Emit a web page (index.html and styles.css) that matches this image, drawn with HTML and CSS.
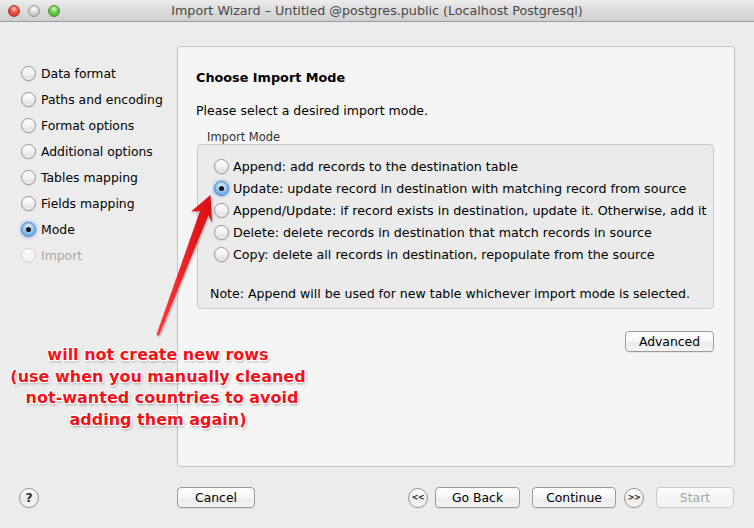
FILE: index.html
```html
<!DOCTYPE html>
<html lang="en">
<head>
<meta charset="utf-8">
<title>Import Wizard</title>
<link rel="stylesheet" href="styles.css">
</head>
<body>
<div class="window">
  <header class="titlebar">
    <div class="lights">
      <span class="light red"></span>
      <span class="light gray"></span>
      <span class="light green"></span>
    </div>
    <div class="title">Import Wizard – Untitled @postgres.public (Localhost Postgresql)</div>
    <div></div>
  </header>

  <div class="main">
    <ul class="steps">
      <li><span class="radio"></span>Data format</li>
      <li><span class="radio"></span>Paths and encoding</li>
      <li><span class="radio"></span>Format options</li>
      <li><span class="radio"></span>Additional options</li>
      <li><span class="radio"></span>Tables mapping</li>
      <li><span class="radio"></span>Fields mapping</li>
      <li><span class="radio on"></span>Mode</li>
      <li class="disabled"><span class="radio dis"></span>Import</li>
    </ul>

    <section class="panel">
      <h1 class="heading">Choose Import Mode</h1>
      <p class="intro">Please select a desired import mode.</p>
      <div class="group-label">Import Mode</div>
      <div class="group">
        <div class="opt"><span class="radio"></span>Append: add records to the destination table</div>
        <div class="opt"><span class="radio on"></span>Update: update record in destination with matching record from source</div>
        <div class="opt"><span class="radio"></span>Append/Update: if record exists in destination, update it. Otherwise, add it</div>
        <div class="opt"><span class="radio"></span>Delete: delete records in destination that match records in source</div>
        <div class="opt"><span class="radio"></span>Copy: delete all records in destination, repopulate from the source</div>
        <p class="note">Note: Append will be used for new table whichever import mode is selected.</p>
      </div>
      <div class="adv-row"><button class="btn adv">Advanced</button></div>
    </section>
  </div>

  <footer class="footer">
    <button class="circle help">?</button>
    <button class="btn cancel">Cancel</button>
    <div class="nav">
      <button class="circle small">&lt;&lt;</button>
      <button class="btn back">Go Back</button>
      <button class="btn cont">Continue</button>
      <button class="circle small fwd">&gt;&gt;</button>
      <button class="btn start" disabled>Start</button>
    </div>
  </footer>

  <svg class="arrow" width="754" height="528" viewBox="0 0 754 528">
    <defs>
      <linearGradient id="ag" x1="0" y1="0" x2="1" y2="0">
        <stop offset="0" stop-color="#ff3b3b"/>
        <stop offset="1" stop-color="#d80c12"/>
      </linearGradient>
      <filter id="sh" x="-20%" y="-20%" width="140%" height="140%">
        <feDropShadow dx="1" dy="1" stdDeviation="1" flood-color="#000" flood-opacity="0.3"/>
      </filter>
    </defs>
    <polygon filter="url(#sh)" fill="url(#ag)" points="210.5,195 191,211.5 200,211 156.5,334.5 158,336 159.5,334.5 208.5,215 212,223"/>
  </svg>

  <div class="annotation">will not create new rows<br>(use when you manually cleaned<br><span class="shift">not-wanted countries to avoid</span><br>adding them again)</div>
</div>
</body>
</html>
```

FILE: styles.css
```css
* { box-sizing: border-box; }

html, body {
  margin: 0;
  padding: 0;
}

body {
  width: 754px;
  height: 528px;
  overflow: hidden;
  background: #ececec;
  font-family: "DejaVu Sans", "Liberation Sans", sans-serif;
  font-size: 12.4px;
  color: #000;
}

.window {
  position: relative;
  width: 754px;
  height: 528px;
  display: flex;
  flex-direction: column;
}

/* title bar */
.titlebar {
  height: 22px;
  flex: none;
  border-bottom: 1px solid #9c9c9c;
  background: linear-gradient(#ececec, #dcdcdc 50%, #cfcfcf);
  display: grid;
  grid-template-columns: 1fr auto 1fr;
  align-items: center;
}

.lights {
  display: flex;
  gap: 8px;
  padding-left: 8px;
}

.light {
  width: 12px;
  height: 12px;
  border-radius: 50%;
}

.light.red {
  border: 1px solid #a63a32;
  background: radial-gradient(circle at 50% 30%, #ffc9c2 0, #f0574b 40%, #c52a20 100%);
}

.light.gray {
  border: 1px solid #9a9a9a;
  background: radial-gradient(circle at 50% 30%, #ffffff 0, #d8d8d8 45%, #a9a9a9 100%);
}

.light.green {
  border: 1px solid #4c8f35;
  background: radial-gradient(circle at 50% 30%, #d8f7c6 0, #79cf55 40%, #3f9a25 100%);
}

.title {
  color: #474747;
  font-size: 12.7px;
  line-height: 21px;
  white-space: nowrap;
}

/* main area */
.main {
  display: flex;
  padding-top: 24px;
  flex: none;
}

.steps {
  width: 177px;
  margin: 0;
  padding: 14px 0 0 21px;
  list-style: none;
  flex: none;
}

.steps li {
  height: 26px;
  display: flex;
  align-items: center;
  gap: 5px;
  white-space: nowrap;
}

.steps li.disabled {
  color: #a9a9a9;
}

.radio {
  position: relative;
  flex: none;
  width: 15px;
  height: 15px;
  border-radius: 50%;
  border: 1px solid #939393;
  background: linear-gradient(#ffffff, #f2f2f2 50%, #e3e3e3 80%, #f8f8f8);
  box-shadow: 0 1px 1px rgba(0, 0, 0, 0.08);
}

.radio.on {
  border-color: #4a7cb6;
  background: radial-gradient(circle at 50% 30%, #e3f1ff 0, #9ccaf5 40%, #5597e2 100%);
  box-shadow: 0 0 3px 1px rgba(85, 145, 225, 0.55);
}

.radio.on::after {
  content: "";
  position: absolute;
  left: 50%;
  top: 50%;
  width: 5px;
  height: 5px;
  margin: -2.5px 0 0 -2.5px;
  border-radius: 50%;
  background: #111;
}

.radio.dis {
  border-color: #cdcdcd;
  background: linear-gradient(#fbfbfb, #efefef);
  box-shadow: none;
}

/* right panel */
.panel {
  width: 558px;
  height: 421px;
  flex: none;
  border: 1px solid #c2c2c2;
  border-radius: 4px;
  background: #f5f5f5;
  padding: 23px 20px 0 18px;
}

.heading {
  margin: 0;
  font-size: 12.8px;
  font-weight: bold;
  line-height: 16px;
}

.intro {
  margin: 17px 0 0;
  line-height: 16px;
  font-size: 12.5px;
}

.group-label {
  margin: 11px 0 0 11px;
  font-size: 11.5px;
  line-height: 14px;
  color: #333;
}

.group {
  margin-left: 1px;
  width: 517px;
  border: 1px solid #c9c9c9;
  border-radius: 4px;
  background: #ebebeb;
  padding: 10px 0 6px 16px;
  font-size: 12.7px;
}

.opt {
  height: 22px;
  display: flex;
  align-items: center;
  gap: 4px;
  white-space: nowrap;
}

.note {
  margin: 21px 0 0 -4px;
  line-height: 16px;
  white-space: nowrap;
  font-size: 12.55px;
}

.adv-row {
  display: flex;
  justify-content: flex-end;
  margin-top: 22px;
}

/* buttons */
.btn {
  height: 21px;
  padding: 0;
  border: 1px solid #9a9a9a;
  border-radius: 4px;
  background: linear-gradient(#ffffff, #f7f7f7 50%, #ebebeb 51%, #f3f3f3);
  box-shadow: 0 1px 0 rgba(0, 0, 0, 0.06);
  font-family: "DejaVu Sans", "Liberation Sans", sans-serif;
  font-size: 12.4px;
  line-height: 19px;
  color: #000;
  flex: none;
}

.adv { width: 89px; }

.btn.start {
  color: #a5a5a5;
  border-color: #c9c9c9;
  background: linear-gradient(#fafafa, #f1f1f1);
  box-shadow: none;
}

.circle {
  width: 20px;
  height: 20px;
  padding: 0;
  border-radius: 50%;
  border: 1px solid #959595;
  background: linear-gradient(#ffffff, #ececec 55%, #f6f6f6);
  box-shadow: 0 1px 0 rgba(0, 0, 0, 0.06);
  font-family: "DejaVu Sans", "Liberation Sans", sans-serif;
  color: #222;
  flex: none;
}

.circle.help {
  font-size: 13px;
  font-weight: bold;
  line-height: 18px;
  color: #333;
}

.circle.small {
  font-size: 8px;
  font-weight: bold;
  line-height: 18px;
  letter-spacing: -0.5px;
}

/* footer */
.footer {
  height: 61px;
  flex: none;
  display: flex;
  align-items: flex-start;
  padding: 20px 20px 0 19px;
}

.footer .help { margin-top: 1px; }

.cancel {
  width: 78px;
  margin-left: 138px;
}

.nav {
  margin-left: auto;
  display: flex;
  align-items: center;
}

.back { width: 85px; margin-left: 7px; }
.cont { width: 84px; margin-left: 12px; }
.fwd { margin-left: 8px; }
.start { width: 78px; margin-left: 12px; }

/* annotation overlay */
.arrow {
  position: absolute;
  left: 0;
  top: 0;
  pointer-events: none;
}

.annotation {
  position: absolute;
  left: 0;
  top: 344px;
  width: 316px;
  text-align: center;
  font-family: "DejaVu Sans", "Liberation Sans", sans-serif;
  font-weight: bold;
  font-size: 16px;
  line-height: 21.7px;
  color: #f3121a;
  white-space: nowrap;
  text-shadow:
    -1px -1px 0 #fff, 1px -1px 0 #fff, -1px 1px 0 #fff, 1px 1px 0 #fff,
    0 -1px 0 #fff, 0 1px 0 #fff, -1px 0 0 #fff, 1px 0 0 #fff,
    1px 2px 3px rgba(0, 0, 0, 0.35);
}

.annotation .shift {
  margin-left: 8px;
}
```
